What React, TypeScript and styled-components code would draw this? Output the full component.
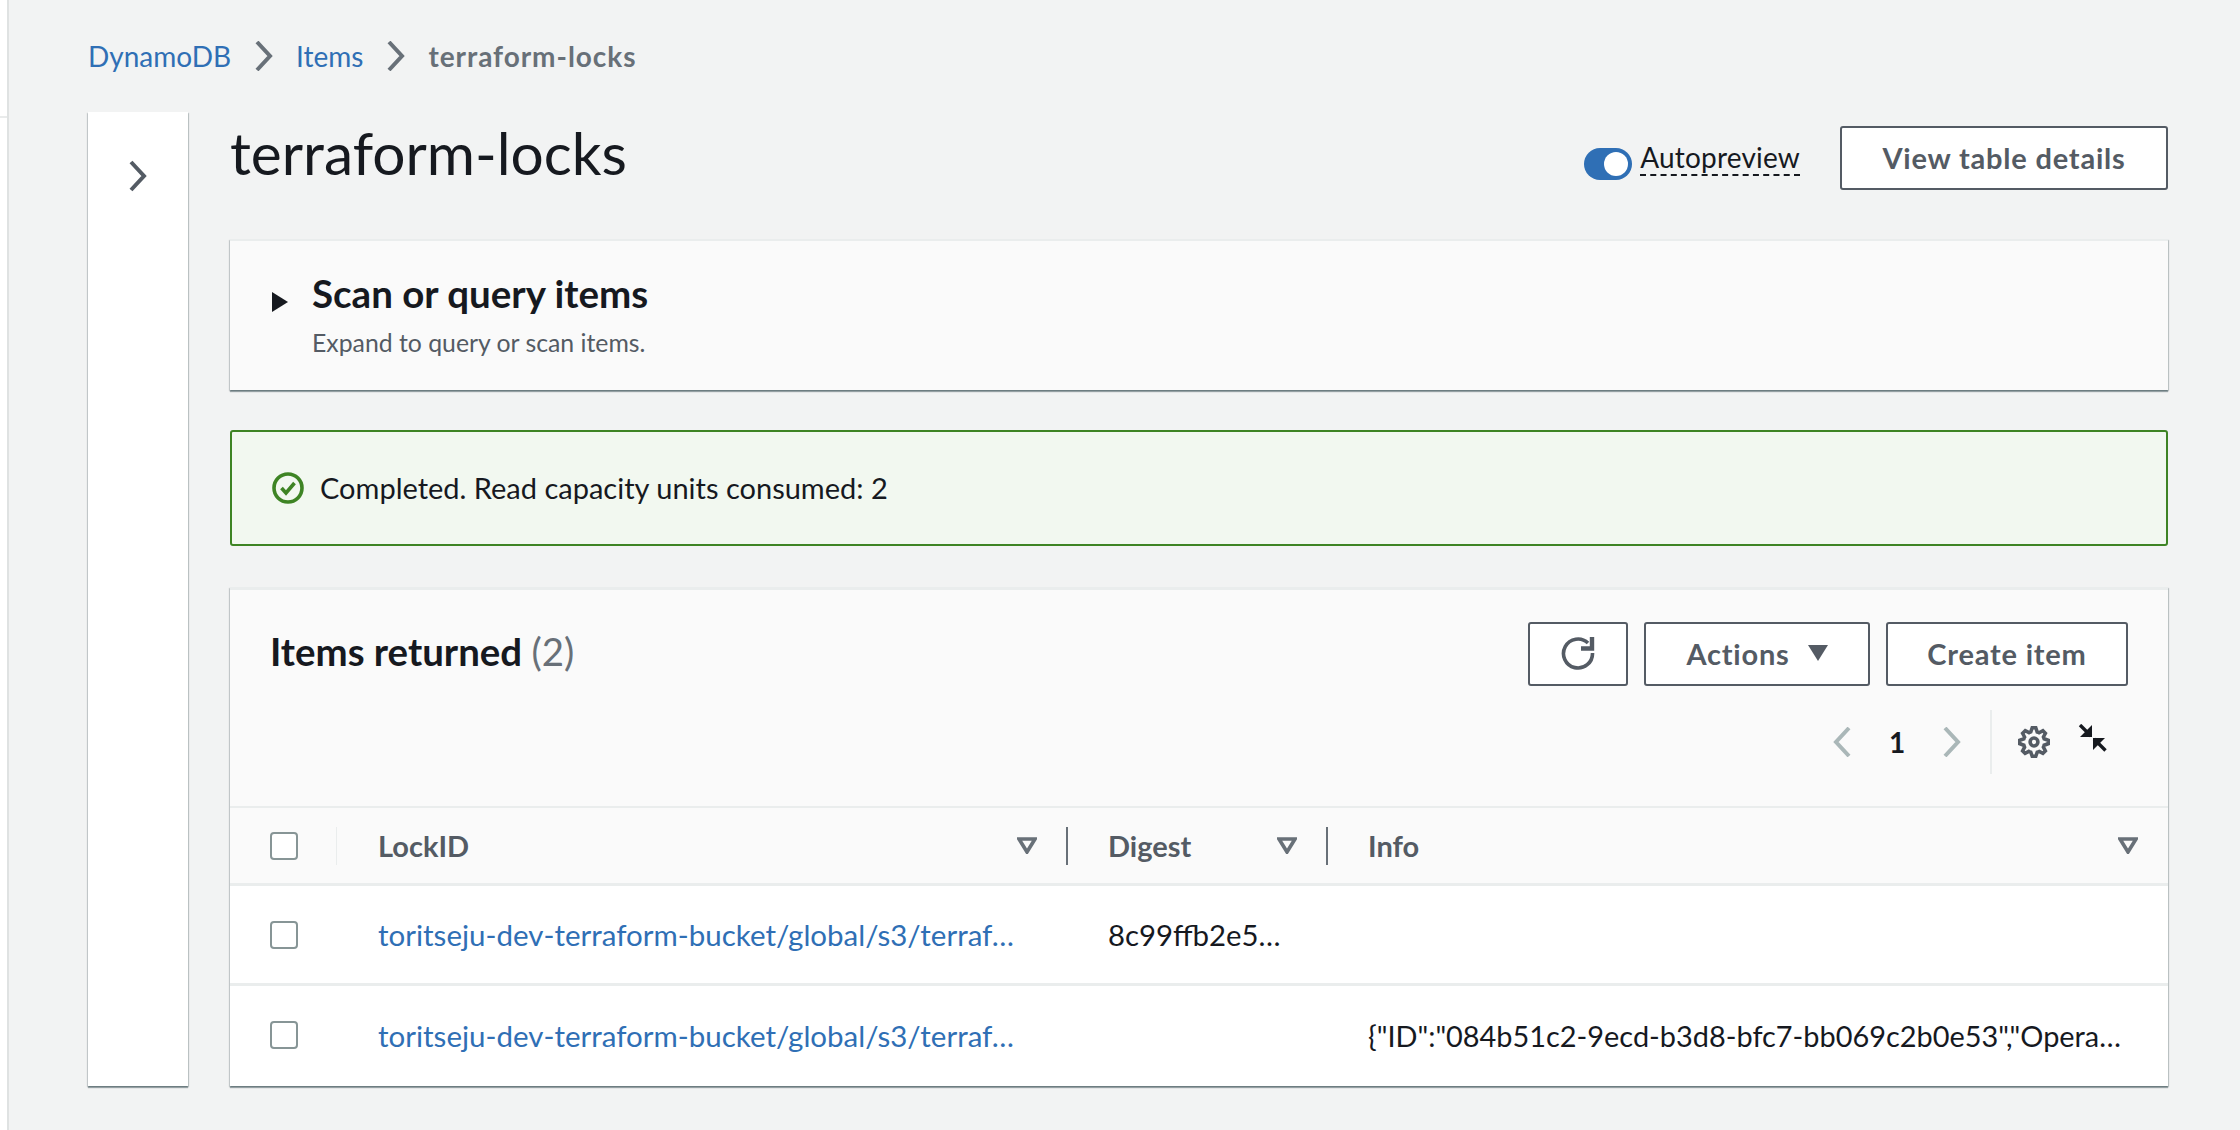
import * as React from 'react';
import styled, { createGlobalStyle } from 'styled-components';

const Colors = {
  page: '#f2f3f3',
  panel: '#fafafa',
  text: '#16191f',
  grey: '#545b64',
  link: '#2f6fb5',
  line: '#eaeded',
  check: '#879596',
  green: '#3e8424',
};

const panelShadow = '0 2px 1px 0 rgba(0, 28, 36, 0.35), 1px 1px 1px 0 rgba(0, 28, 36, 0.18), -1px 1px 1px 0 rgba(0, 28, 36, 0.15)';

const GlobalStyle = createGlobalStyle`
  html, body { margin: 0; padding: 0; background: ${Colors.page}; }
  body { font-family: Lato, "Noto Sans", sans-serif; color: ${Colors.text}; font-size: 28px; }
  * { box-sizing: border-box; }
`;

const Page = styled.div`
  display: flex;
  width: 2240px;
  height: 1130px;
  overflow: hidden;
  background: ${Colors.page};
`;

const LeftStrip = styled.div`
  width: 9px;
  height: 100%;
  background: #ffffff;
  border-right: 2px solid #dfe2e2;
`;

const StripNotch = styled.div`
  height: 118px;
  border-bottom: 2px solid #e9ebeb;
`;

const Main = styled.main`
  flex: 1;
  padding: 36px 72px 0 79px;
`;

const Breadcrumbs = styled.nav`
  display: flex;
  align-items: center;
  height: 40px;
  margin-bottom: 36px;
`;

const CrumbLink = styled.a`
  color: ${Colors.link};
  font-size: 28px;
`;

const CrumbCurrent = styled.span`
  color: #687078;
  font-size: 28px;
  font-weight: 700;
  letter-spacing: 0.95px;
`;

const CrumbChevron = styled.svg`
  width: 18px;
  height: 30px;
  margin: 0 23px 0 24px;
  fill: none;
  stroke: #687078;
  stroke-width: 4;
`;

const Body = styled.div`
  display: flex;
  gap: 42px;
`;

const Sidebar = styled.aside`
  width: 100px;
  height: 974px;
  flex-shrink: 0;
  display: flex;
  justify-content: center;
  padding-top: 48px;
  background: #ffffff;
  box-shadow: ${panelShadow};
`;

const SideChevron = styled.svg`
  width: 18px;
  height: 32px;
  fill: none;
  stroke: ${Colors.grey};
  stroke-width: 4;
`;

const Content = styled.div`
  flex: 1;
  min-width: 0;
`;

const TitleRow = styled.header`
  display: flex;
  justify-content: space-between;
  height: 127px;
`;

const Title = styled.h1`
  margin: 0;
  font-size: 58.6px;
  font-weight: 400;
  line-height: 80px;
`;

const TitleActions = styled.div`
  display: flex;
  align-items: flex-start;
  padding-top: 14px;
`;

const AutoPreview = styled.div`
  display: flex;
  align-items: center;
  gap: 8px;
  height: 63px;
  margin-right: 40px;
`;

const Toggle = styled.span`
  display: flex;
  justify-content: flex-end;
  align-items: center;
  width: 48px;
  height: 32px;
  margin-top: 13px;
  padding-right: 4px;
  border-radius: 16px;
  background: ${Colors.link};
`;

const ToggleKnob = styled.span`
  width: 24px;
  height: 24px;
  border-radius: 50%;
  background: #ffffff;
`;

const ToggleLabel = styled.span`
  font-size: 28px;
  letter-spacing: 0.2px;
  line-height: 34px;
  border-bottom: 2px dashed ${Colors.text};
`;

const Button = styled.button<{ $w: number }>`
  display: flex;
  align-items: center;
  justify-content: center;
  gap: 18px;
  width: ${(p) => p.$w}px;
  height: 64px;
  padding: 0 0 2px;
  background: #ffffff;
  border: 2px solid ${Colors.grey};
  border-radius: 3px;
  color: ${Colors.grey};
  font-family: inherit;
  font-size: 29px;
  font-weight: 700;
  letter-spacing: 0.8px;
`;

const Panel = styled.section`
  background: ${Colors.panel};
  border-top: 2px solid ${Colors.line};
  box-shadow: ${panelShadow};
`;

const ScanPanel = styled(Panel)`
  display: flex;
  height: 151px;
  padding: 28px 40px 0 42px;
`;

const Caret = styled.svg`
  width: 16px;
  height: 20px;
  margin: 23px 24px 0 0;
  fill: ${Colors.text};
`;

const ScanTitle = styled.h2`
  margin: 0;
  font-size: 38.5px;
  font-weight: 700;
  line-height: 48px;
`;

const ScanHint = styled.p`
  margin: 9px 0 0;
  font-size: 24.8px;
  line-height: 34px;
  color: ${Colors.grey};
`;

const Flash = styled.div`
  display: flex;
  align-items: center;
  gap: 16px;
  height: 116px;
  margin: 40px 0 41px;
  padding: 0 40px 1px;
  background: #f2f8f0;
  border: 2px solid ${Colors.green};
  border-radius: 3px;
  font-size: 29px;
`;

const CheckIcon = styled.svg`
  width: 32px;
  height: 32px;
  fill: none;
  stroke: ${Colors.green};
  stroke-width: 3.6;
`;

const ItemsPanel = styled(Panel)`
  height: 499px;
  border-top-width: 3px;
`;

const ItemsHead = styled.div`
  height: 218px;
  padding: 32px 40px 0;
  border-bottom: 2px solid ${Colors.line};
`;

const ItemsTop = styled.div`
  display: flex;
  justify-content: space-between;
`;

const ItemsTitle = styled.h2`
  margin: 0;
  font-size: 38.4px;
  font-weight: 700;
  line-height: 59px;
`;

const Count = styled.span`
  font-weight: 400;
  color: #687078;
`;

const ButtonRow = styled.div`
  display: flex;
  gap: 16px;
`;

const Tools = styled.div`
  display: flex;
  justify-content: flex-end;
  align-items: center;
  height: 64px;
  margin-top: 24px;
  margin-right: 10px;
`;

const PageChevron = styled.svg`
  width: 18px;
  height: 30px;
  fill: none;
  stroke: #aab7b8;
  stroke-width: 4;
`;

const PageNumber = styled.span`
  width: 92px;
  text-align: center;
  font-size: 28px;
  font-weight: 700;
`;

const ToolDivider = styled.div`
  width: 2px;
  height: 64px;
  margin: 0 26px 0 29px;
  background: ${Colors.line};
`;

const GearIcon = styled.svg`
  width: 32px;
  height: 32px;
  fill: none;
  stroke: ${Colors.grey};
  stroke-width: 2;
`;

const CollapseIcon = styled.svg`
  width: 30px;
  height: 30px;
  margin: 0 10px 6px 28px;
  fill: ${Colors.text};
  stroke: ${Colors.text};
`;

const HeadRow = styled.div`
  display: grid;
  grid-template-columns: 107px 731px 260px 1fr;
  align-items: center;
  height: 78px;
  border-bottom: 3px solid ${Colors.line};
`;

const BodyRow = styled.div<{ $last?: boolean }>`
  display: grid;
  grid-template-columns: 107px 731px 260px 1fr;
  align-items: center;
  height: 100px;
  padding-bottom: ${(p) => (p.$last ? 2 : 0)}px;
  background: #ffffff;
  border-bottom: ${(p) => (p.$last ? 'none' : `3px solid ${Colors.line}`)};
`;

const SelectCell = styled.div<{ $rule?: boolean }>`
  display: flex;
  align-items: center;
  height: 38px;
  padding-left: 40px;
  border-right: ${(p) => (p.$rule ? `1px solid ${Colors.line}` : 'none')};
`;

const Checkbox = styled.span`
  width: 28px;
  height: 28px;
  background: #ffffff;
  border: 2px solid ${Colors.check};
  border-radius: 4px;
`;

const HeadCell = styled.div<{ $rule?: boolean; $inset?: number }>`
  display: flex;
  align-items: center;
  justify-content: space-between;
  height: 38px;
  padding: 0 ${(p) => (p.$rule ? 29 : 30)}px 0 ${(p) => p.$inset ?? 41}px;
  border-right: ${(p) => (p.$rule ? `2px solid #687078` : 'none')};
  color: ${Colors.grey};
  font-weight: 700;
  font-size: 29px;
`;

const FilterIcon = styled.svg`
  width: 20px;
  height: 17px;
  fill: none;
  stroke: #687078;
  stroke-width: 3.6;
`;

const Cell = styled.div<{ $size: number; $inset?: number }>`
  padding-left: ${(p) => p.$inset ?? 41}px;
  white-space: nowrap;
  font-size: ${(p) => p.$size}px;
`;

const RowLink = styled.a`
  color: ${Colors.link};
`;

const Chevron = ({ left }: { left?: boolean }) => (
  <polyline points={left ? '16,1 3,15 16,29' : '2,1 15,15 2,29'} strokeLinejoin="miter" />
);

const Filter = () => (
  <FilterIcon viewBox="0 0 20 17">
    <polygon points="2,2 18,2 10,15" />
  </FilterIcon>
);

const lockId = 'toritseju-dev-terraform-bucket/global/s3/terraf…';

const App = () => (
  <Page>
    <GlobalStyle />
    <LeftStrip>
      <StripNotch />
    </LeftStrip>
    <Main>
      <Breadcrumbs>
        <CrumbLink>DynamoDB</CrumbLink>
        <CrumbChevron viewBox="0 0 18 30"><Chevron /></CrumbChevron>
        <CrumbLink>Items</CrumbLink>
        <CrumbChevron viewBox="0 0 18 30"><Chevron /></CrumbChevron>
        <CrumbCurrent>terraform-locks</CrumbCurrent>
      </Breadcrumbs>
      <Body>
        <Sidebar>
          <SideChevron viewBox="0 0 18 30"><Chevron /></SideChevron>
        </Sidebar>
        <Content>
          <TitleRow>
            <Title>terraform-locks</Title>
            <TitleActions>
              <AutoPreview>
                <Toggle><ToggleKnob /></Toggle>
                <ToggleLabel>Autopreview</ToggleLabel>
              </AutoPreview>
              <Button $w={328}>View table details</Button>
            </TitleActions>
          </TitleRow>

          <ScanPanel>
            <Caret viewBox="0 0 16 20"><polygon points="0,0 16,10 0,20" /></Caret>
            <div>
              <ScanTitle>Scan or query items</ScanTitle>
              <ScanHint>Expand to query or scan items.</ScanHint>
            </div>
          </ScanPanel>

          <Flash>
            <CheckIcon viewBox="0 0 32 32">
              <circle cx="16" cy="16" r="14" />
              <polyline points="9.5,16 14,21 22.5,11" />
            </CheckIcon>
            Completed. Read capacity units consumed: 2
          </Flash>

          <ItemsPanel>
            <ItemsHead>
              <ItemsTop>
                <ItemsTitle>Items returned <Count>(2)</Count></ItemsTitle>
                <ButtonRow>
                  <Button $w={100}>
                    <svg width="34" height="34" viewBox="0 0 34 34" fill="none" stroke={Colors.grey} strokeWidth="3.6">
                      <path d="M27 7A14.5 14.5 0 1 0 31.5 17" />
                      <path d="M31 1V12.5H20" strokeWidth="4.4" />
                    </svg>
                  </Button>
                  <Button $w={226}>
                    Actions
                    <svg width="20" height="16" viewBox="0 0 20 16" fill={Colors.grey}><polygon points="0,0 20,0 10,16" /></svg>
                  </Button>
                  <Button $w={242}>Create item</Button>
                </ButtonRow>
              </ItemsTop>
              <Tools>
                <PageChevron viewBox="0 0 18 30"><Chevron left /></PageChevron>
                <PageNumber>1</PageNumber>
                <PageChevron viewBox="0 0 18 30"><Chevron /></PageChevron>
                <ToolDivider />
                <GearIcon viewBox="-1 -1 18 18">
                  <circle cx="8" cy="8" r="2.2" />
                  <path d="M13.3 5.2l1.1-2.1L13 1.7l-2.1 1.1c-.3-.2-.7-.3-1.1-.4L9 0H7l-.8 2.3c-.3.1-.7.2-1 .4L3.1 1.6 1.6 3.1l1.1 2.1c-.2.3-.3.7-.4 1L0 7v2l2.3.8c.1.4.3.7.4 1.1l-1.1 2.1 1.4 1.4 2.1-1.1c.3.2.7.3 1.1.4L7 16h2l.8-2.3c.4-.1.7-.3 1.1-.4l2.1 1.1 1.4-1.4-1.1-2.1c.2-.3.3-.7.4-1.1L16 9V7l-2.3-.8c-.1-.3-.3-.7-.4-1z" />
                </GearIcon>
                <CollapseIcon viewBox="0 0 30 30">
                  <line x1="2" y1="1" x2="13" y2="12" strokeWidth="3.4" />
                  <polygon points="2,13 14,13 14,1" strokeWidth="0" />
                  <line x1="16" y1="15" x2="27.5" y2="26.5" strokeWidth="3.4" />
                  <polygon points="15,14 27,14 15,26" strokeWidth="0" />
                </CollapseIcon>
              </Tools>
            </ItemsHead>

            <HeadRow>
              <SelectCell $rule><Checkbox /></SelectCell>
              <HeadCell $rule>LockID <Filter /></HeadCell>
              <HeadCell $rule $inset={40}>Digest <Filter /></HeadCell>
              <HeadCell $inset={40}>Info <Filter /></HeadCell>
            </HeadRow>
            <BodyRow>
              <SelectCell><Checkbox /></SelectCell>
              <Cell $size={29.5}><RowLink>{lockId}</RowLink></Cell>
              <Cell $size={29.3} $inset={40}>8c99ffb2e5…</Cell>
              <Cell $size={29} />
            </BodyRow>
            <BodyRow $last>
              <SelectCell><Checkbox /></SelectCell>
              <Cell $size={29.5}><RowLink>{lockId}</RowLink></Cell>
              <Cell $size={29} />
              <Cell $size={28.9} $inset={40}>{'{"ID":"084b51c2-9ecd-b3d8-bfc7-bb069c2b0e53","Opera…'}</Cell>
            </BodyRow>
          </ItemsPanel>
        </Content>
      </Body>
    </Main>
  </Page>
);

export default App;
